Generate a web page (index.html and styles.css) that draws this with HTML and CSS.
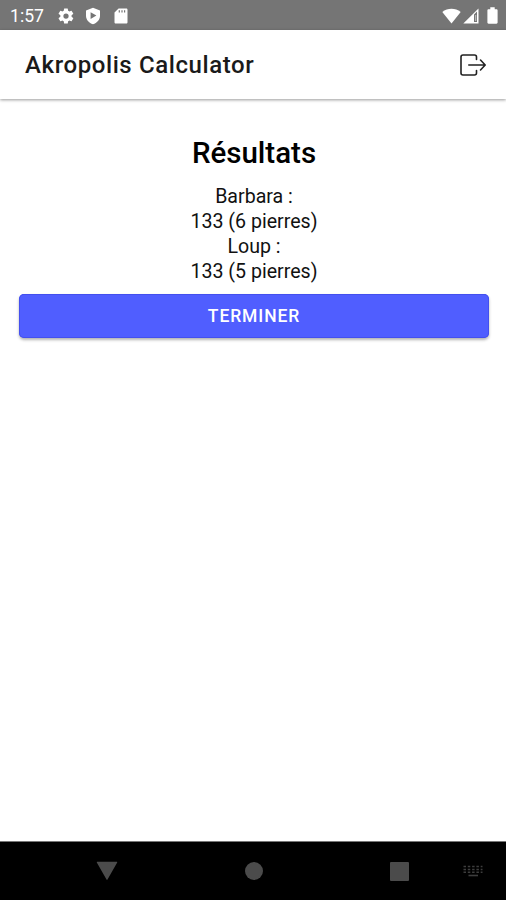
FILE: index.html
```html
<!DOCTYPE html>
<html lang="fr">
	<head>
		<meta charset="UTF-8">
		<title>Akropolis Calculator</title>
		<link rel="stylesheet" href="styles.css">
	</head>
	<body>
		<div class="app">
			<div class="status">
				<span class="time">1:57</span>
				<svg class="gear" width="18" height="18" viewBox="0 0 24 24"><path fill-rule="evenodd" d="M19.4 13a7.500 7.500 0 0 0 0-2l2.100-1.600a.5.5 0 0 0 .1-.7l-2-3.400a.5.5 0 0 0-.6-.2l-2.500 1a7.300 7.300 0 0 0-1.700-1l-.4-2.700a.5.5 0 0 0-.5-.4h-4a.5.5 0 0 0-.5.4L9 5.100a7.300 7.300 0 0 0-1.700 1l-2.500-1a.5.5 0 0 0-.6.200l-2 3.400a.5.5 0 0 0 .1.7L4.500 11a7.500 7.500 0 0 0 0 2l-2.200 1.600a.5.5 0 0 0-.1.7l2 3.400c.1.200.4.300.6.200l2.500-1a7.300 7.300 0 0 0 1.700 1l.4 2.700c0 .2.200.4.5.4h4c.3 0 .5-.2.5-.4l.4-2.700a7.300 7.300 0 0 0 1.700-1l2.500 1c.2.100.5 0 .6-.2l2-3.400a.5.5 0 0 0-.1-.7zM12 15.500a3.500 3.500 0 1 1 0-7 3.500 3.500 0 0 1 0 7z"/></svg>
				<svg class="shield" width="16" height="18" viewBox="0 0 16 18"><path fill-rule="evenodd" d="M8 .8L15 3.400v5.400c0 4-3 7.300-7 8.500-4-1.200-7-4.500-7-8.500V3.400zM5.600 5.300v6.600L11.400 8.600z"/></svg>
				<svg class="card" width="14" height="16" viewBox="0 0 14 16"><path fill-rule="evenodd" d="M4.600.5h7.600c.8 0 1.300.5 1.300 1.300v12.400c0 .8-.5 1.300-1.300 1.300H1.800c-.8 0-1.300-.5-1.300-1.300V4.600zM4.700 2.200v2.300h1.200V2.200zm2.700 0v2.300h1.200V2.200zm2.600 0v2.300h1.200V2.200z"/></svg>
				<div class="signals">
					<svg width="19" height="16" viewBox="0 0 19 16"><path d="M.3 4C5.600-.4 13.400-.4 18.700 4L9.500 15.600z"/></svg>
					<svg width="16" height="16" viewBox="0 0 16 16"><path fill-rule="evenodd" d="M15.500.4v15.200H.3zM11 6.500v7.600h3V3.600z"/><path d="M12.200 7h1v6h-1z" opacity=".6"/></svg>
					<svg class="battery" width="11" height="17" viewBox="0 0 11 17"><path d="M3.300.3h4.400v1.900h1.800c.6 0 1.100.5 1.100 1.100v12.300c0 .6-.5 1.100-1.100 1.100h-8c-.6 0-1.100-.5-1.100-1.100V3.300c0-.6.500-1.100 1.100-1.100h1.800z"/></svg>
				</div>
			</div>
			<div class="header">
				<h1 class="title">Akropolis Calculator</h1>
				<svg class="exit" width="28" height="24" viewBox="0 0 28 24">
					<path d="M17.500 6.500V4a2 2 0 0 0-2-2H4a2 2 0 0 0-2 2v16a2 2 0 0 0 2 2h11.500a2 2 0 0 0 2-2v-2.500"/>
					<path d="M9.800 12h16M21.500 7l4.700 5-4.700 5"/>
				</svg>
			</div>
			<div class="content">
				<h2 class="heading">Résultats</h2>
				<div class="scores">
					<div>Barbara :</div>
					<div>133 (6 pierres)</div>
					<div>Loup :</div>
					<div>133 (5 pierres)</div>
				</div>
				<button class="finish">TERMINER</button>
			</div>
			<div class="nav">
				<svg class="back" width="22" height="20" viewBox="0 0 22 20"><path d="M1.200.8h19.600c.4 0 .6.400.4.700L11.500 18.600c-.2.400-.8.400-1 0L.8 1.500C.6 1.200.8.8 1.200.8z"/></svg>
				<svg class="home" width="18" height="18" viewBox="0 0 18 18"><circle cx="9" cy="9" r="9"/></svg>
				<svg class="recent" width="19" height="19" viewBox="0 0 19 19"><rect width="19" height="19" rx="1"/></svg>
				<svg class="keyboard" width="20" height="12" viewBox="0 0 20 12">
					<path stroke-dasharray="2.500 1.800" d="M.5 1.500h19M.5 4.500h19M.5 7.200h19"/>
					<path d="M5.500 10.500h9.500"/>
				</svg>
			</div>
		</div>
	</body>
</html>
```

FILE: styles.css
```css
body{
	margin: 0;
	font-family: Roboto, "Liberation Sans", sans-serif;
	color: #000;
	background-color: #fff;
}
svg{
	display: block;
	flex: none;
}
.app{
	display: flex;
	flex-direction: column;
	height: 900px;
}
.status{
	display: flex;
	align-items: center;
	box-sizing: border-box;
	height: 30px;
	padding: 1px 8px 0 10px;
	background-color: #757575;
	color: #fff;
	fill: #fff;
}
.time{
	width: 47px;
	font-size: 17.6px;
	line-height: 30px;
}
.shield{
	margin-left: 10px;
}
.card{
	margin-left: 13px;
}
.signals{
	display: flex;
	align-items: center;
	gap: 2px;
	margin-left: auto;
}
.battery{
	margin-left: 6px;
}
.header{
	display: flex;
	align-items: center;
	justify-content: space-between;
	height: 69px;
	padding: 0 19px 0 25px;
	box-shadow: 0 1px 3px rgba(0,0,0,.4);
}
.title{
	margin: 0;
	font-size: 24px;
	font-weight: 500;
	letter-spacing: .6px;
	color: #1a1a1a;
}
.exit{
	fill: none;
	stroke: #222;
	stroke-width: 1.6;
	stroke-linecap: round;
	stroke-linejoin: round;
}
.content{
	flex: 1;
	padding: 36px 17px 0 19px;
	text-align: center;
}
.heading{
	margin: 0 0 13px;
	font-size: 29.5px;
	font-weight: 500;
	line-height: 36px;
}
.scores{
	font-size: 19.6px;
	line-height: 25px;
	color: #111;
}
.finish{
	display: block;
	width: 100%;
	height: 44px;
	margin-top: 10px;
	padding: 0;
	border: 0;
	border-radius: 5px;
	background-color: #505eff;
	box-shadow: inset 0 0 0 1px #4450ee, 0 2px 3px rgba(0,0,0,.3);
	color: #fff;
	font: 500 17.5px Roboto, "Liberation Sans", sans-serif;
	letter-spacing: .9px;
}
.nav{
	display: flex;
	align-items: center;
	box-sizing: border-box;
	height: 59px;
	padding-left: 96px;
	border-top: 1px solid #777;
	background-color: #000;
	fill: #4b4b4b;
}
.home{
	margin-left: 127px;
}
.recent{
	margin-left: 127px;
}
.keyboard{
	margin-left: 54px;
	fill: none;
	stroke: #3d3d3d;
	stroke-width: 1.6;
}
```
